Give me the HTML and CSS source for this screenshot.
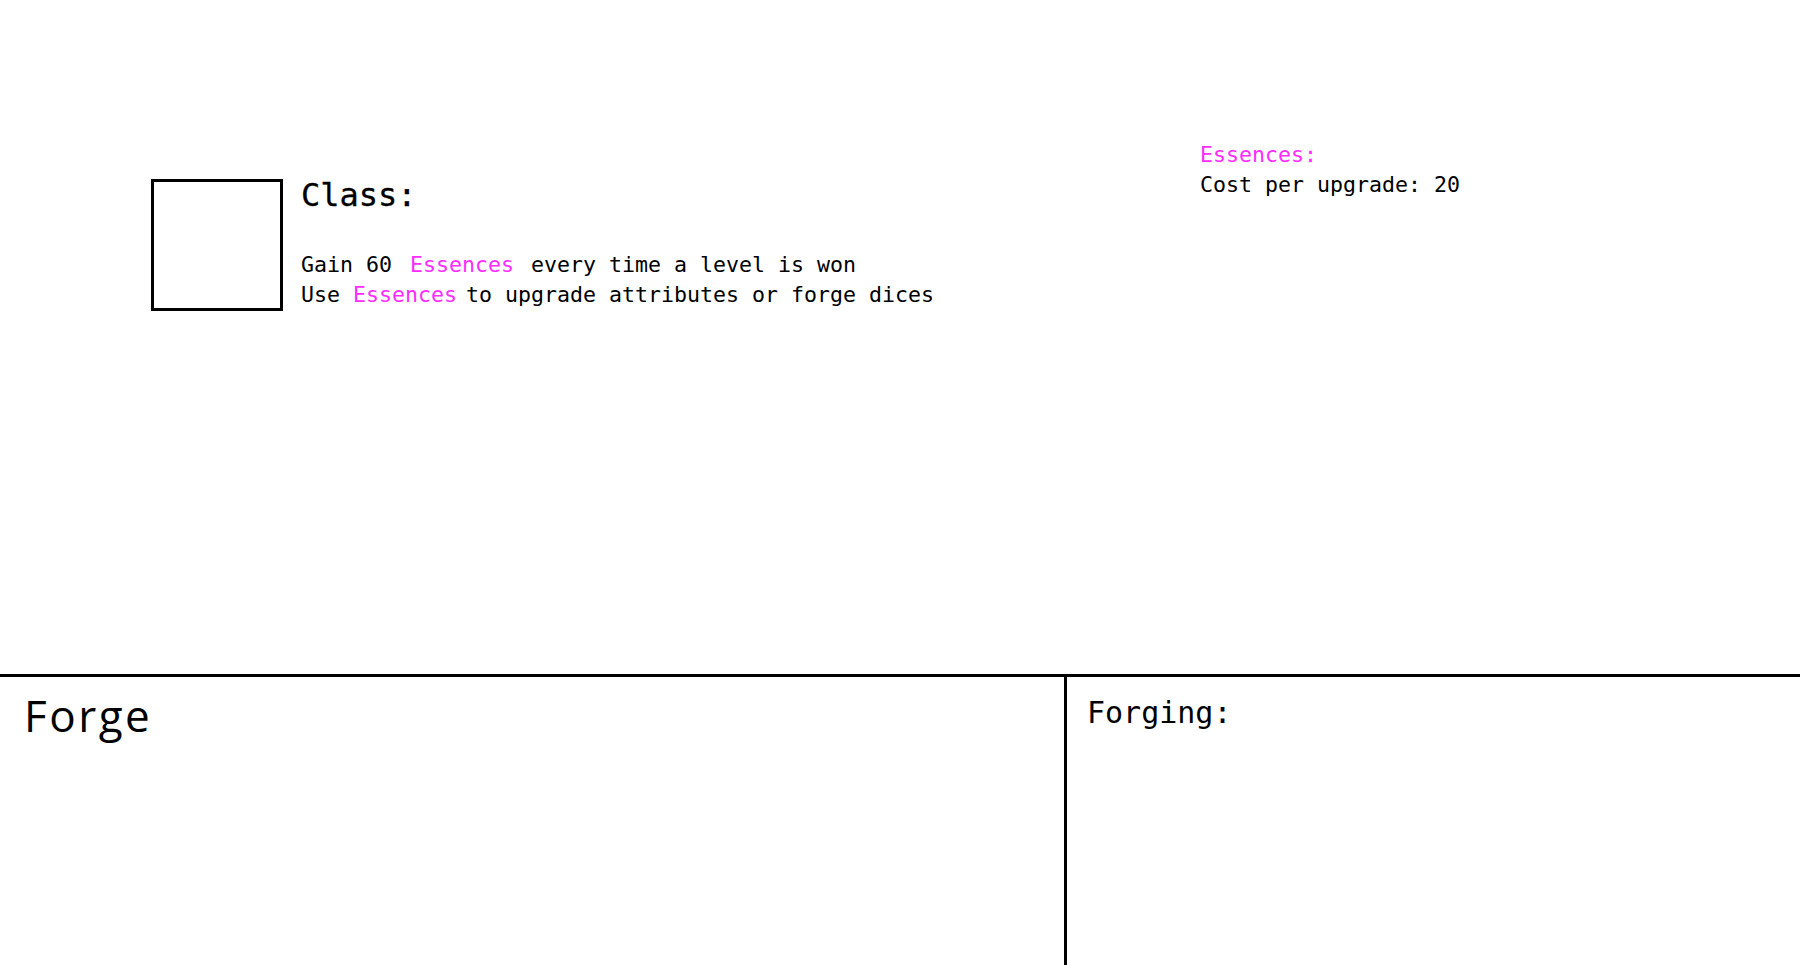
FILE: index.html
```html
<!DOCTYPE html>
<html>
<head>
<meta charset="utf-8">
<link rel="stylesheet" href="styles.css">
</head>
<body>
<div class="top">
  <div class="class-info">
    <div class="portrait"></div>
    <div class="class-text">
      <div class="class-title">Class:</div>
      <div class="desc">
        <div class="line">Gain 60<span class="ess ess-wide">Essences</span>every time a level is won</div>
        <div class="line">Use <span class="ess ess-tight">Essences</span>to upgrade attributes or forge dices</div>
      </div>
    </div>
  </div>
  <div class="essence-info">
    <div class="line ess">Essences:</div>
    <div class="line">Cost per upgrade: 20</div>
  </div>
</div>
<div class="bottom">
  <div class="forge">
    <div class="forge-title">Forge</div>
  </div>
  <div class="forging">
    <div class="forging-title">Forging:</div>
  </div>
</div>
</body>
</html>
```
FILE: styles.css
```css
html, body {
  margin: 0;
  padding: 0;
  background: #ffffff;
  color: #000000;
}
body {
  width: 1800px;
  height: 965px;
  overflow: hidden;
  font-family: "DejaVu Sans Mono", "Liberation Mono", monospace;
}
.top {
  height: 674px;
  box-sizing: border-box;
  padding: 140px 0 0 151px;
  display: grid;
  grid-template-columns: 1049px auto;
  align-items: start;
}
.class-info {
  display: flex;
  align-items: flex-start;
  gap: 18px;
  margin-top: 37px;
}
.portrait {
  width: 132px;
  height: 132px;
  box-sizing: border-box;
  border: 3px solid #000;
  margin-top: 2px;
}
.class-title {
  font-size: 32px;
  line-height: 36px;
  -webkit-text-stroke: 0.3px #000;
}
.desc {
  margin-top: 37px;
}
.line {
  font-size: 21.6px;
  line-height: 30px;
  white-space: pre;
}
.ess {
  color: #ff2bff;
}
.ess-wide {
  margin-left: 18px;
  margin-right: 17px;
}
.ess-tight {
  margin-right: 9px;
}
.bottom {
  height: 291px;
  border-top: 3px solid #000;
  display: flex;
}
.forge {
  width: 1067px;
  border-right: 3px solid #000;
  padding: 12px 0 0 24px;
  box-sizing: border-box;
}
.forge-title {
  font-family: "Open Sans", "Noto Sans", sans-serif;
  font-size: 44px;
  line-height: 52px;
  letter-spacing: 2.5px;
}
.forging {
  flex: 1;
  padding: 19px 0 0 20px;
}
.forging-title {
  font-size: 30px;
  line-height: 34px;
}
```
